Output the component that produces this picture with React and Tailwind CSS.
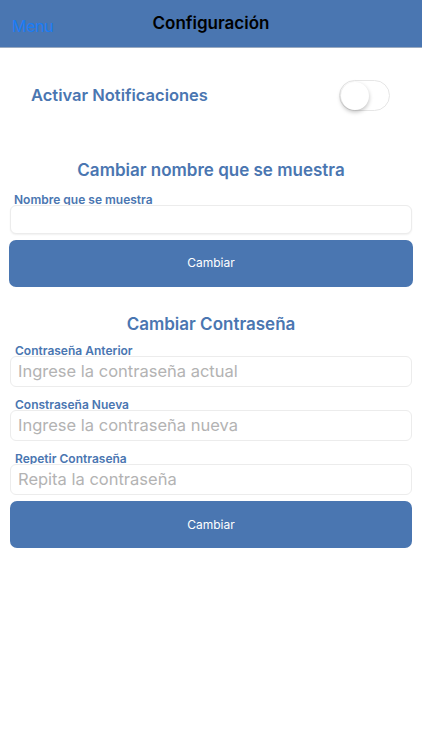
export default function App() {
  const fields = [
    { label: 'Contraseña Anterior', placeholder: 'Ingrese la contraseña actual' },
    { label: 'Constraseña Nueva', placeholder: 'Ingrese la contraseña nueva' },
    { label: 'Repetir Contraseña', placeholder: 'Repita la contraseña' },
  ];

  return (
    <div className="w-[422px] h-[750px] bg-white font-['Inter',sans-serif] overflow-hidden">
      {/* Nav bar */}
      <div className="h-[48px] bg-[#4a76b1] border-b border-[#9aaac0] flex items-center relative">
        <span className="absolute left-[12px] top-[14px] text-[16px] text-[#1a7cf5] tracking-[-0.3px]">Menu</span>
        <h1 className="w-full text-center text-[17px] font-semibold text-black">Configuración</h1>
      </div>

      {/* Notifications */}
      <div className="flex items-center justify-between pl-[31px] pr-[32px] mt-[32px]">
        <span className="text-[16.5px] font-semibold text-[#4a76b1]">Activar Notificaciones</span>
        <div className="w-[51px] h-[31px] rounded-full border border-[#e6e6e6] bg-white flex items-center pl-[1px]">
          <div className="w-[28px] h-[28px] rounded-full bg-white shadow-[0_2px_4px_rgba(0,0,0,0.25)]" />
        </div>
      </div>

      {/* Display name */}
      <h2 className="text-center text-[17px] font-semibold text-[#4a76b1] mt-[47px]">Cambiar nombre que se muestra</h2>
      <div className="px-[10px] mt-[9px]">
        <div className="pl-[4px] text-[12px] font-semibold text-[#4a76b1] leading-[14px] h-[12px] overflow-hidden">Nombre que se muestra</div>
        <div className="h-[29px] rounded-[6px] border border-[#ececec] bg-white shadow-[0_1px_2px_rgba(0,0,0,0.06)]" />
      </div>
      <div className="px-[9px] mt-[6px]">
        <button className="w-full h-[47px] rounded-[7px] bg-[#4a76b1] text-white text-[12px]">Cambiar</button>
      </div>

      {/* Password */}
      <h2 className="text-center text-[17px] font-semibold text-[#4a76b1] mt-[25px]">Cambiar Contraseña</h2>
      <div className="px-[10px] mt-[7px] flex flex-col gap-[11px]">
        {fields.map((f) => (
          <div key={f.label}>
            <div className="pl-[5px] text-[12px] font-semibold text-[#4a76b1] leading-[14px] h-[12px] overflow-hidden">{f.label}</div>
            <div className="h-[31px] rounded-[6px] border border-[#ececec] bg-white flex items-center px-[7px]">
              <span className="text-[16.5px] text-[#b3b3b3]">{f.placeholder}</span>
            </div>
          </div>
        ))}
      </div>
      <div className="px-[10px] mt-[6px]">
        <button className="w-full h-[47px] rounded-[7px] bg-[#4a76b1] text-white text-[12px]">Cambiar</button>
      </div>
    </div>
  );
}
